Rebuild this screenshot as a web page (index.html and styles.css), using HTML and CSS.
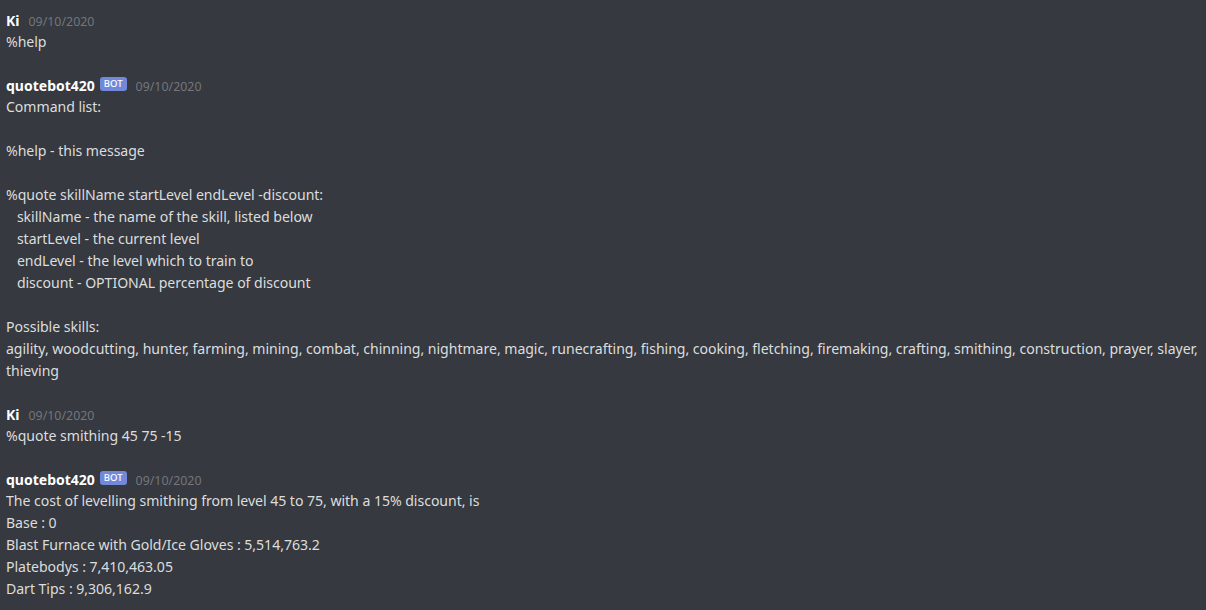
FILE: index.html
```html
<!DOCTYPE html>
<html lang="en">

<head>
    <meta charset="UTF-8">
    <meta name="viewport" content="width=device-width, initial-scale=1.0">

    <title>quotebot420</title>

    <link rel="stylesheet" href="styles.css">
</head>

<body>
    <div class="chat">
        <div class="message">
            <div class="header">
                <span class="username">Ki</span>
                <span class="timestamp">09/10/2020</span>
            </div>
            <div class="content">%help</div>
        </div>

        <div class="message">
            <div class="header">
                <span class="username">quotebot420</span>
                <span class="bot-tag">BOT</span>
                <span class="timestamp">09/10/2020</span>
            </div>
<div class="content">Command list:

%help - this message

%quote skillName startLevel endLevel -discount:
   skillName - the name of the skill, listed below
   startLevel - the current level
   endLevel - the level which to train to
   discount - OPTIONAL percentage of discount

Possible skills:
agility, woodcutting, hunter, farming, mining, combat, chinning, nightmare, magic, runecrafting, fishing, cooking, fletching, firemaking, crafting, smithing, construction, prayer, slayer, thieving</div>
        </div>

        <div class="message">
            <div class="header">
                <span class="username">Ki</span>
                <span class="timestamp">09/10/2020</span>
            </div>
            <div class="content">%quote smithing 45 75 -15</div>
        </div>

        <div class="message">
            <div class="header">
                <span class="username">quotebot420</span>
                <span class="bot-tag">BOT</span>
                <span class="timestamp">09/10/2020</span>
            </div>
<div class="content">The cost of levelling smithing from level 45 to 75, with a 15% discount, is
Base : 0
Blast Furnace with Gold/Ice Gloves : 5,514,763.2
Platebodys : 7,410,463.05
Dart Tips : 9,306,162.9</div>
        </div>
    </div>
</body>

</html>
```

FILE: styles.css
```css
/* General styles */
body {
    font-family: 'Noto Sans', 'Open Sans', sans-serif;
    background: #36393f;
    margin: 0;
    padding: 0;
    color: #dcddde;
    overflow: hidden;
}

/* Chat log */
.chat {
    display: flex;
    flex-direction: column;
    gap: 21px;
    padding: 9px 6px 0 6px;
}

.header {
    display: flex;
    align-items: center;
    height: 22px;
}

.username {
    color: #ffffff;
    font-size: 14px;
    font-weight: bold;
}

.timestamp {
    color: #72767d;
    font-size: 12.4px;
    margin-left: 9px;
    padding-top: 2px;
}

/* BOT badge */
.bot-tag {
    background-color: #7289da;
    color: #ffffff;
    font-size: 9.5px;
    font-weight: 500;
    line-height: 14px;
    padding: 0 4px;
    border-radius: 3px;
    margin-left: 5px;
    margin-top: -2px;
}

.bot-tag + .timestamp {
    margin-left: 9px;
}

.content {
    font-size: 14.1px;
    letter-spacing: -0.04px;
    line-height: 22px;
    white-space: pre-wrap;
}
```
